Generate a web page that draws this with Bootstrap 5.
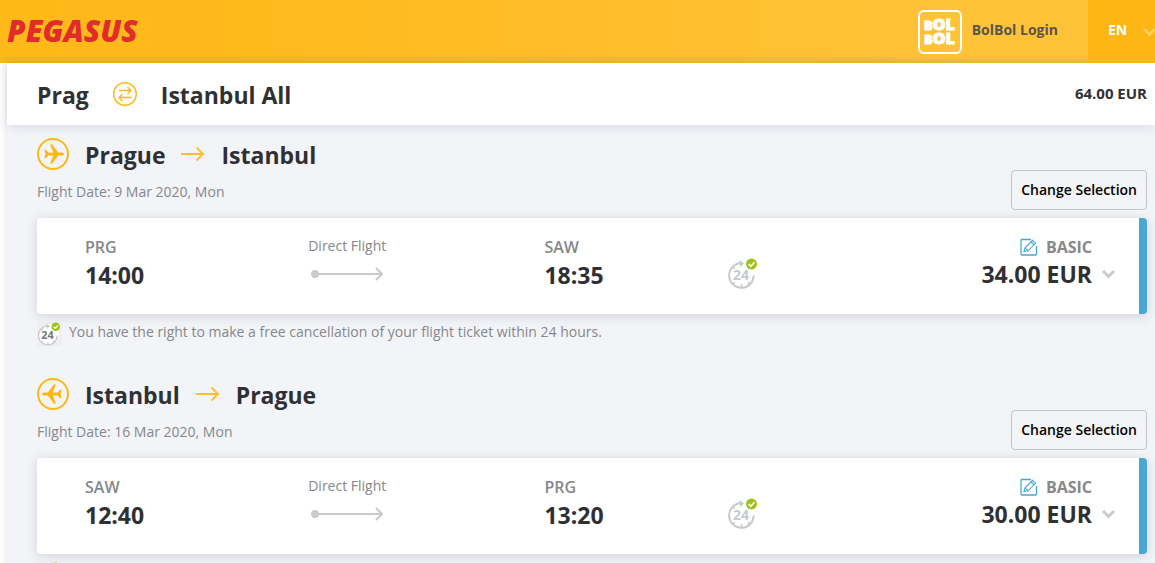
<!DOCTYPE html>
<html lang="en">
<head>
<meta charset="utf-8">
<meta name="viewport" content="width=device-width, initial-scale=1">
<title>Pegasus - Flight Selection</title>
<link href="https://cdn.jsdelivr.net/npm/bootstrap@5.3.0/dist/css/bootstrap.min.css" rel="stylesheet">
<style>
  :root { --ink: #2f3033; --soft: #85878a; --line: #c8cacc; }
  body { font-family: "Open Sans", sans-serif; font-size: 14px; line-height: 20px; color: var(--ink); background: #fff; }
  svg { display: block; flex: none; }
  .topbar { height: 63px; background: linear-gradient(90deg, #ffb919, #ffb91a 18%, #ffc33a 85%, #ffc239); }
  .brand { font: italic 800 30px/32px "Open Sans", sans-serif; color: #e22c2c; text-decoration: none; padding: 0 0 2px 7px; }
  .login { font-weight: 700; color: #5b564a; text-decoration: none; padding-right: 30px; }
  .bolbol text { font: 800 16px/16px "Open Sans", sans-serif; fill: #fff; stroke: #fff; stroke-width: 1px; }
  .bolbol .cap { font-size: 13px; }
  .lang { width: 67px; padding: 0 0 0 20px; border: 0; background: #fdb714; color: #fff; font-weight: 700; overflow: hidden; }
  .lang svg { margin-left: 15px; color: #ffcf5c; }
  .content-area { margin-left: 7px; background: #f3f4f8; box-shadow: 0 0 8px rgba(60, 60, 90, .16); min-height: calc(100vh - 63px); }
  .summary { height: 62px; padding: 0 8px 0 30px; background: #fff; box-shadow: 0 2px 10px rgba(60, 60, 90, .13); }
  .place { font-size: 23px; line-height: 32px; font-weight: 700; margin: 0; padding-top: 2px; }
  .total { font-size: 15px; font-weight: 700; padding-bottom: 2px; }
  .leg { padding: 12px 8px 0 30px; height: 240px; }
  .route { gap: 16px; }
  .soft { color: var(--soft); }
  .date { padding: 11px 0 8px; }
  .change { height: 40px; padding: 0 9px; font-weight: 600; color: #000; background: #f3f4f8; border: 1px solid #c4c6ca; border-radius: 4px; }
  .flight { display: grid; grid-template-columns: 223fr 236fr 183fr 188fr 200fr; height: 96px; margin-top: 8px; padding: 17px 23px 0 48px; background: #fff; border-right: 8px solid #48a7d4; border-radius: 4px; box-shadow: 0 2px 12px rgba(50, 50, 70, .17); }
  .direct { padding-top: 1px; }
  .direct svg { margin-top: 11px; }
  .code { font-size: 16px; line-height: 24px; font-weight: 600; color: var(--soft); }
  .hour { font-size: 23px; line-height: 32px; font-weight: 700; }
  .clock-cell { padding-top: 23px; color: var(--line); }
  .fare { justify-self: end; white-space: nowrap; }
  .fare .code { padding-right: 24px; font-weight: 700; }
  .fare .hour { gap: 9px; line-height: 30px; }
  .toggle { border: 0; background: none; padding: 0; color: var(--line); }
  .note { margin-top: 8px; gap: 7px; }
  .note .tile { width: 25px; height: 24px; background: #eeeeef; color: var(--line); }
</style>
</head>
<body>
<svg width="0" height="0" class="position-absolute" aria-hidden="true">
  <defs>
    <symbol id="plane" viewBox="0 0 32 32">
      <circle cx="16" cy="16" r="15" fill="none" stroke="#fdb813" stroke-width="2"/>
      <path fill="#fdb813" d="M7.3 11.7h1.5l3 3 4.5-.1-3.3-8.1h2.2l6 8h3.1c1.4 0 2.6.5 2.6 1.5S25.700 17.500 24.300 17.500h-3.100l-6 8H13l3.300-8.100-4.500-.2-3 3.100H7.300l1.200-4.300z"/>
    </symbol>
    <symbol id="arrow" viewBox="0 0 24 16">
      <path d="M0 8h22M15.500 1.500 22 8l-6.500 6.500" fill="none" stroke="#ffc02c" stroke-width="2"/>
    </symbol>
    <symbol id="track" viewBox="0 0 76 14">
      <circle cx="7" cy="7" r="4" fill="#c8cacc"/>
      <path d="M7 7h67M68 1l6 6-6 6" fill="none" stroke="#c8cacc" stroke-width="2"/>
    </symbol>
    <symbol id="clock" viewBox="0 0 31 31">
      <path d="M11.500 5.300A12.300 12.300 0 1 0 25.700 17.500M11.500 5.300h3" fill="none" stroke="currentColor" stroke-width="2"/>
      <path d="M11 2l5 3.200-3.500 4z" fill="currentColor"/>
      <path d="M13.500 26v3M4.800 9l2 1.700M5 26l2-2M22 26l-2-2" stroke="currentColor" stroke-width="1.500"/>
      <circle cx="23.500" cy="6" r="5.500" fill="#9fc31a"/>
      <path d="M20.800 6l2 2.200 3.700-3.900" fill="none" stroke="#fff" stroke-width="1.600"/>
    </symbol>
    <symbol id="edit" viewBox="0 0 18 18">
      <path d="M11 1.500H2a1 1 0 0 0-1 1V16a1 1 0 0 0 1 1h13.500a1 1 0 0 0 1-1V8" fill="none" stroke="#48a7d4" stroke-width="1.300"/>
      <path d="M4 13.500l1-3.700 7.500-7.500 3 3L8 12.800zM11 3.800l3 3M5 9.800l3 3" fill="none" stroke="#48a7d4" stroke-width="1.100"/>
    </symbol>
    <symbol id="chevron" viewBox="0 0 15 10">
      <path d="M2 2l5.500 5.500L13 2" fill="none" stroke="currentColor" stroke-width="3"/>
    </symbol>
  </defs>
</svg>

<header class="topbar d-flex align-items-stretch">
  <a class="brand align-self-center" href="#">PEGASUS</a>
  <a class="login d-flex align-items-center ms-auto" href="#">
    <svg class="bolbol me-2" width="46" height="44" viewBox="0 0 46 44" aria-hidden="true">
      <rect x="1" y="1" width="42" height="42" rx="5" fill="none" stroke="#fff" stroke-width="2"/>
      <text x="6" y="20"><tspan class="cap">B</tspan>OL</text>
      <text x="6" y="34"><tspan class="cap">B</tspan>OL</text>
    </svg>
    <span class="pb-1">BolBol Login</span>
  </a>
  <button class="lang d-flex align-items-center" type="button"><span class="pb-1">EN</span>
    <svg width="15" height="10"><use href="#chevron"/></svg>
  </button>
</header>

<main class="content-area">
  <div class="summary d-flex align-items-center">
    <h1 class="place">Prag</h1>
    <svg class="mx-4" width="24" height="24" viewBox="0 0 24 24" role="img" aria-label="Round trip">
      <circle cx="12" cy="12" r="11.300" fill="none" stroke="#fdb813" stroke-width="1.400"/>
      <path d="M6 8.500h12M14.500 5l3.500 3.500-3.500 3.500M18.500 15.500H6M9.500 12 6 15.500 9.500 19" fill="none" stroke="#fdb813" stroke-width="1.300"/>
    </svg>
    <h1 class="place">Istanbul All</h1>
    <div class="total ms-auto">64.00 EUR</div>
  </div>

  <section class="leg">
    <div class="d-flex justify-content-between align-items-end">
      <div>
        <div class="route d-flex align-items-center">
          <svg width="32" height="32"><use href="#plane"/></svg>
          <h2 class="place">Prague</h2>
          <svg width="24" height="16"><use href="#arrow"/></svg>
          <h2 class="place">Istanbul</h2>
        </div>
        <div class="date soft">Flight Date: 9 Mar 2020, Mon</div>
      </div>
      <button class="change" type="button">Change Selection</button>
    </div>
    <div class="flight">
      <div><div class="code">PRG</div><div class="hour">14:00</div></div>
      <div class="direct soft">Direct Flight<svg width="76" height="14"><use href="#track"/></svg></div>
      <div><div class="code">SAW</div><div class="hour">18:35</div></div>
      <div class="clock-cell"><svg width="31" height="31"><use href="#clock"/><text x="5" y="22" font-size="14" font-weight="700" fill="currentColor">24</text></svg></div>
      <div class="fare">
        <div class="code d-flex justify-content-end align-items-center gap-2"><svg width="18" height="18"><use href="#edit"/></svg>BASIC</div>
        <div class="hour d-flex align-items-center">34.00 EUR
          <button class="toggle" type="button" aria-label="Show details"><svg width="15" height="10"><use href="#chevron"/></svg></button></div>
      </div>
    </div>
    <div class="note soft d-flex align-items-start">
      <div class="tile"><svg width="25" height="24" viewBox="0 0 31 31"><circle cx="14" cy="17" r="14" fill="#fff"/><use href="#clock" width="31" height="31"/><text x="5" y="22" font-size="14" font-weight="700" fill="#77797c">24</text></svg></div>
      <span>You have the right to make a free cancellation of your flight ticket within 24 hours.</span>
    </div>
  </section>

  <section class="leg">
    <div class="d-flex justify-content-between align-items-end">
      <div>
        <div class="route d-flex align-items-center">
          <svg width="32" height="32" viewBox="0 0 32 32"><g transform="translate(32 0) scale(-1 1)"><use href="#plane" width="32" height="32"/></g></svg>
          <h2 class="place">Istanbul</h2>
          <svg width="24" height="16"><use href="#arrow"/></svg>
          <h2 class="place">Prague</h2>
        </div>
        <div class="date soft">Flight Date: 16 Mar 2020, Mon</div>
      </div>
      <button class="change" type="button">Change Selection</button>
    </div>
    <div class="flight">
      <div><div class="code">SAW</div><div class="hour">12:40</div></div>
      <div class="direct soft">Direct Flight<svg width="76" height="14"><use href="#track"/></svg></div>
      <div><div class="code">PRG</div><div class="hour">13:20</div></div>
      <div class="clock-cell"><svg width="31" height="31"><use href="#clock"/><text x="5" y="22" font-size="14" font-weight="700" fill="currentColor">24</text></svg></div>
      <div class="fare">
        <div class="code d-flex justify-content-end align-items-center gap-2"><svg width="18" height="18"><use href="#edit"/></svg>BASIC</div>
        <div class="hour d-flex align-items-center">30.00 EUR
          <button class="toggle" type="button" aria-label="Show details"><svg width="15" height="10"><use href="#chevron"/></svg></button></div>
      </div>
    </div>
    <div class="note soft d-flex align-items-start">
      <div class="tile"><svg width="25" height="24" viewBox="0 0 31 31"><circle cx="14" cy="17" r="14" fill="#fff"/><use href="#clock" width="31" height="31"/></svg></div>
    </div>
  </section>
</main>
<script src="https://cdn.jsdelivr.net/npm/bootstrap@5.3.0/dist/js/bootstrap.bundle.min.js"></script>
</body>
</html>
